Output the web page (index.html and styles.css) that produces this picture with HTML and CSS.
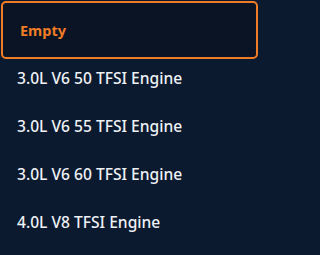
FILE: index.html
```html
<!DOCTYPE html>
<html>
<head>
<meta charset="utf-8">
<link rel="stylesheet" href="styles.css">
</head>
<body>
<ul class="menu">
  <li class="option selected">Empty</li>
  <li class="option">3.0L V6 50 TFSI Engine</li>
  <li class="option">3.0L V6 55 TFSI Engine</li>
  <li class="option">3.0L V6 60 TFSI Engine</li>
  <li class="option">4.0L V8 TFSI Engine</li>
</ul>
</body>
</html>
```
FILE: styles.css
```css
html, body {
  margin: 0;
  padding: 0;
  background: #0c1a2f;
  height: 100%;
}
.menu {
  list-style: none;
  margin: 0;
  width: 259px;
  box-sizing: border-box;
  padding: 1px 1px 0 1px;
  display: flex;
  flex-direction: column;
  font-family: "Noto Sans", sans-serif;
  font-weight: 500;
  font-size: 15.6px;
  color: #eef1f5;
}
.option {
  box-sizing: border-box;
  height: 48px;
  padding-bottom: 10px;
  display: flex;
  align-items: center;
  padding-left: 16px;
}
.selected {
  height: 58px;
  padding-bottom: 0;
  padding-left: 17px;
  border: 2px solid #f07c26;
  border-radius: 5px;
  background: #0a1424;
  color: #f07c26;
  font-weight: 700;
  font-size: 14.5px;
}
```
